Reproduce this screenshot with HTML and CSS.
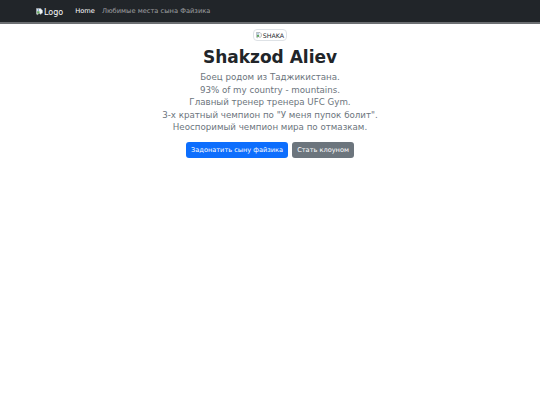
FILE: index.html
```html
<!DOCTYPE html>
<html lang="ru">
<head>
    <meta charset="UTF-8">
    <title>Shakzod Aliev</title>
    <link rel="stylesheet" href="styles.css">
</head>
<body>
    <!-- Навигация -->
    <nav class="navbar">
        <div class="nav-inner">
            <span class="brand">
                <svg class="broken" width="7" height="8" viewBox="0 0 9 10">
                    <path d="M0.5 0.5 H6 L8.5 3 V6 L6 8 L4 6.5 L2 8.5 L0.5 7.5 Z" fill="#f1f3f4" stroke="#9aa0a6" stroke-width="1"/>
                    <rect x="1.5" y="4" width="3" height="3" fill="#5fa35c"/>
                    <circle cx="3" cy="2.5" r="0.9" fill="#3b82c4"/>
                </svg>Logo
            </span>
            <a class="nav-link active" href="#">Home</a>
            <a class="nav-link" href="#">Любимые места сына Файзика</a>
        </div>
    </nav>

    <!-- Главный блок -->
    <main class="hero">
        <div class="thumb">
            <svg class="broken" width="6" height="7" viewBox="0 0 9 10">
                <path d="M0.5 0.5 H6 L8.5 3 V6 L6 8 L4 6.5 L2 8.5 L0.5 7.5 Z" fill="#f1f3f4" stroke="#9aa0a6" stroke-width="1"/>
                <rect x="1.5" y="4" width="3" height="3" fill="#5fa35c"/>
                <circle cx="3" cy="2.5" r="0.9" fill="#3b82c4"/>
            </svg>SHAKA
        </div>
        <h1>Shakzod Aliev</h1>
        <p class="lead">
            Боец родом из Таджикистана.<br>
            93% of my country - mountains.<br>
            Главный тренер тренера UFC Gym.<br>
            3-х кратный чемпион по "У меня пупок болит".<br>
            Неоспоримый чемпион мира по отмазкам.
        </p>
        <div class="actions">
            <a href="#" class="btn btn-primary">Задонатить сыну файзика</a>
            <a href="#" class="btn btn-secondary">Стать клоуном</a>
        </div>
    </main>
</body>
</html>
```

FILE: styles.css
```css
/* Общие стили */
body {
    margin: 0;
    font-family: "DejaVu Sans", sans-serif;
    color: #212529;
    background-color: #fff;
}
a {
    text-decoration: none;
}
/* Навбар */
.navbar {
    background-color: #212529;
    height: 22px;
    border-bottom: 2px solid #6c6f72;
}
.nav-inner {
    display: flex;
    align-items: center;
    height: 22px;
    padding-left: 36px;
}
.brand {
    display: flex;
    align-items: flex-start;
    color: #f8f9fa;
    font-size: 8px;
    line-height: 10px;
    margin-right: 12px;
    padding-top: 3px;
}
.broken {
    margin-right: 1px;
}
.nav-link {
    font-size: 6.7px;
    color: rgba(255, 255, 255, 0.55);
    margin-right: 7px;
}
.nav-link.active {
    color: #fff;
}
/* Блок с героем */
.hero {
    display: flex;
    flex-direction: column;
    align-items: center;
    text-align: center;
    padding-top: 5px;
}
.thumb {
    display: flex;
    align-items: center;
    font-size: 6.3px;
    color: #212529;
    border: 1px solid #dee2e6;
    border-radius: 4px;
    padding: 0 2px;
    height: 10px;
}
h1 {
    font-size: 17px;
    font-weight: bold;
    margin: 6px 0 4px;
    line-height: 20px;
}
.lead {
    font-size: 8.7px;
    line-height: 12.5px;
    color: #6c757d;
    margin: 0 0 8px;
}
.actions {
    display: flex;
    justify-content: center;
    gap: 4px;
}
.btn {
    font-size: 6.6px;
    color: #fff;
    padding: 0 5px;
    height: 16px;
    line-height: 16px;
    border-radius: 3px;
}
.btn-primary {
    background-color: #0d6efd;
}
.btn-secondary {
    background-color: #6c757d;
}
```
